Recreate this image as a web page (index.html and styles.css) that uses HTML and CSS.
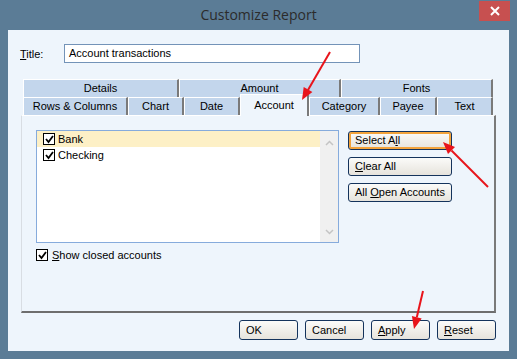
FILE: index.html
```html
<!DOCTYPE html>
<html>
<head>
    <title>Customize Report</title>
    <link rel="stylesheet" href="styles.css">
</head>
<body>
    <div class="window">
        <div class="titlebar">
            <span></span>
            <span class="caption">Customize Report</span>
            <span class="close">
                <svg width="10" height="10" viewBox="0 0 10 10">
                    <path d="M1 1 L9 9 M9 1 L1 9" stroke="#fff" stroke-width="2"/>
                </svg>
            </span>
        </div>

        <div class="client">
            <div class="title-row">
                <label><u>T</u>itle:</label>
                <div class="input">Account transactions</div>
            </div>

            <div class="tabs">
                <div class="tab-row">
                    <div class="tab" style="width:156px">Details</div>
                    <div class="tab" style="width:162px">Amount</div>
                    <div class="tab" style="width:152px">Fonts</div>
                </div>
                <div class="tab-row">
                    <div class="tab" style="width:105px">Rows &amp; Columns</div>
                    <div class="tab" style="width:56px">Chart</div>
                    <div class="tab" style="width:56px">Date</div>
                    <div class="tab selected" style="width:69px">Account</div>
                    <div class="tab" style="width:71px">Category</div>
                    <div class="tab" style="width:57px">Payee</div>
                    <div class="tab" style="width:56px">Text</div>
                </div>
            </div>

            <div class="panel">
                <div class="panel-top">
                    <div class="listbox">
                        <div class="items">
                            <div class="item active">
                                <span class="check"><svg width="9" height="9" viewBox="0 0 9 9"><path d="M1 4 L3.5 7 L8 1" fill="none" stroke="#000" stroke-width="1.8"/></svg></span>
                                Bank
                            </div>
                            <div class="item">
                                <span class="check"><svg width="9" height="9" viewBox="0 0 9 9"><path d="M1 4 L3.5 7 L8 1" fill="none" stroke="#000" stroke-width="1.8"/></svg></span>
                                Checking
                            </div>
                        </div>
                        <div class="scrollbar">
                            <svg width="9" height="6" viewBox="0 0 9 6"><path d="M1 5 L4.5 1.5 L8 5" fill="none" stroke="#c4c4c4" stroke-width="1.5"/></svg>
                            <svg width="9" height="6" viewBox="0 0 9 6"><path d="M1 1 L4.5 4.5 L8 1" fill="none" stroke="#c4c4c4" stroke-width="1.5"/></svg>
                        </div>
                    </div>
                    <div class="side-buttons">
                        <div class="btn focus">Select A<u>l</u>l</div>
                        <div class="btn"><u>C</u>lear All</div>
                        <div class="btn">All <u>O</u>pen Accounts</div>
                    </div>
                </div>
                <div class="check-line">
                    <span class="check"><svg width="9" height="9" viewBox="0 0 9 9"><path d="M1 4 L3.5 7 L8 1" fill="none" stroke="#000" stroke-width="1.8"/></svg></span>
                    <span><u>S</u>how closed accounts</span>
                </div>
            </div>

            <div class="footer">
                <div class="btn">OK</div>
                <div class="btn">Cancel</div>
                <div class="btn"><u>A</u>pply</div>
                <div class="btn"><u>R</u>eset</div>
            </div>
        </div>
    </div>

    <!-- red annotation arrows -->
    <svg class="arrows" width="517" height="359" viewBox="0 0 517 359">
        <g stroke="#e8141b" stroke-width="2" fill="#e8141b">
            <line x1="330" y1="52" x2="308" y2="90"/>
            <polygon points="302,100 312.4,92.1 303.7,87.1" stroke="none"/>
            <line x1="488" y1="187" x2="451.5" y2="150.5"/>
            <polygon points="443,142 455,147 448,154" stroke="none"/>
            <line x1="423" y1="291" x2="416.8" y2="317.3"/>
            <polygon points="414,329 421.7,318.4 411.9,316.1" stroke="none"/>
        </g>
    </svg>
</body>
</html>
```

FILE: styles.css
```css
body {
    margin: 0;
    width: 517px;
    height: 359px;
    background-color: #5b7c96;
    font-family: "Liberation Sans", Arial, sans-serif;
    font-size: 11px;
    color: #000;
    overflow: hidden;
}

.window {
    width: 517px;
    height: 359px;
}

.titlebar {
    display: grid;
    grid-template-columns: 1fr auto 1fr;
    height: 30px;
}

.caption {
    font-family: "Open Sans", sans-serif;
    font-size: 14px;
    color: #2b2b2b;
    align-self: center;
    padding-bottom: 1px;
}

.close {
    justify-self: end;
    align-self: start;
    width: 31px;
    height: 20px;
    margin-top: 1px;
    margin-right: 7px;
    background-color: #c75050;
    display: flex;
    align-items: center;
    justify-content: center;
}

.client {
    margin: 0 8px;
    height: 321px;
    box-sizing: border-box;
    background-color: #eef5fc;
    padding: 14px 13px 0 13px;
}

.title-row {
    display: flex;
    align-items: center;
    height: 19px;
}

.title-row label {
    width: 44px;
    margin-left: -1px;
}

.input {
    width: 296px;
    height: 19px;
    box-sizing: border-box;
    border: 1px solid #7393b8;
    background-color: #fff;
    padding: 0 4px;
    line-height: 17px;
}

.tabs {
    margin-top: 16px;
    margin-left: 2px;
}

.tab-row {
    display: flex;
    align-items: flex-end;
    height: 18px;
}

.tab {
    height: 18px;
    box-sizing: border-box;
    background-color: #c3d6ec;
    border-top: 1px solid #fff;
    border-left: 1px solid #fff;
    border-right: 2px solid #7a7a7a;
    text-align: center;
    line-height: 17px;
}

.tab.selected {
    height: 22px;
    margin-bottom: -1px;
    background-color: #eef5fc;
    position: relative;
    line-height: 21px;
}

.panel {
    height: 198px;
    box-sizing: border-box;
    border-top: 1px solid #fff;
    border-left: 1px solid #d8dde3;
    border-right: 2px solid #7a7a7a;
    border-bottom: 2px solid #6e6e6e;
    padding: 14px 14px 0 14px;
}

.panel-top {
    display: flex;
    gap: 9px;
}

.listbox {
    width: 303px;
    height: 113px;
    box-sizing: border-box;
    border: 1px solid #86abdc;
    background-color: #fff;
    display: flex;
}

.items {
    flex: 1;
}

.item {
    display: flex;
    align-items: center;
    height: 16px;
    padding-left: 6px;
    gap: 3px;
}

.item.active {
    background-color: #fdf0c6;
}

.check {
    width: 12px;
    height: 12px;
    box-sizing: border-box;
    border: 1px solid #000;
    background-color: #fff;
    display: inline-flex;
    align-items: center;
    justify-content: center;
}

.scrollbar {
    width: 18px;
    background-color: #f0f0f0;
    display: flex;
    flex-direction: column;
    align-items: center;
    justify-content: space-between;
    padding: 9px 0 7px 0;
}

.side-buttons {
    display: flex;
    flex-direction: column;
    gap: 7px;
    margin-top: 1px;
}

.btn {
    width: 104px;
    height: 19px;
    box-sizing: border-box;
    border: 1px solid #14335c;
    border-radius: 3px;
    background: linear-gradient(#fbfbf9, #e6e3dc);
    padding-left: 6px;
    line-height: 17px;
}

.btn.focus {
    box-shadow: inset 0 0 0 2px #f3a33b;
}

.check-line {
    display: flex;
    align-items: center;
    gap: 4px;
    margin-top: 6px;
}

.footer {
    display: flex;
    justify-content: flex-end;
    gap: 7px;
    margin-top: 7px;
}

.footer .btn {
    width: 59px;
    height: 20px;
    line-height: 18px;
}

.arrows {
    position: absolute;
    left: 0;
    top: 0;
    pointer-events: none;
}
```
